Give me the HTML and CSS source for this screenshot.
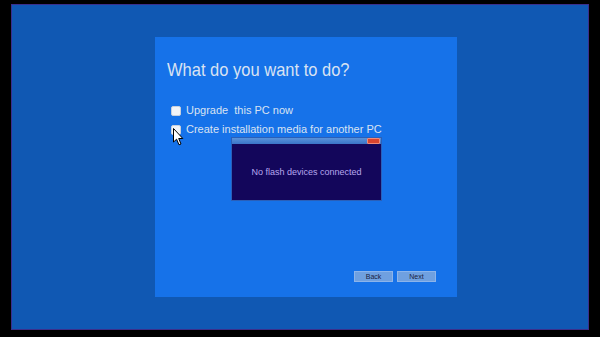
FILE: index.html
```html
<!DOCTYPE html>
<html lang="en">

<head>
	<meta charset="UTF-8">
	<title>Setup</title>
	<link rel="stylesheet" href="styles.css">
</head>

<body>
	<div class="screen">
		<div class="panel">
			<h1 class="title">What do you want to do?</h1>
			<ul class="options">
				<li><span class="box"></span>Upgrade&nbsp; this PC now</li>
				<li><span class="box"></span>Create installation media for another PC</li>
			</ul>
			<div class="buttons">
				<span class="btn">Back</span>
				<span class="btn">Next</span>
			</div>

			<div class="dialog">
				<div class="bar"><span class="close"></span></div>
				<div class="msg">No flash devices connected</div>
			</div>

			<svg class="cursor" width="11" height="18" viewBox="0 0 11 18">
				<path d="M0.5 0.5 L0.5 14 L3.6 11.2 L6 16.8 L8 16 L5.7 10.5 L9.8 10.5 Z" fill="#fff" stroke="#000" stroke-width="1"/>
			</svg>
		</div>
	</div>
</body>

</html>
```

FILE: styles.css
```css
body {
	margin: 0;
	background: #000;
	font-family: 'Liberation Sans', Arial, sans-serif;
}

.screen {
	margin: 4px 11px 0;
	width: 578px;
	height: 326px;
	background: #1058b3;
	box-shadow: inset 0 0 0 1px #3b2f8c;
	padding: 33px 0 0 144px;
	box-sizing: border-box;
}

.panel {
	position: relative;
	width: 302px;
	height: 260px;
	background: #1672e9;
	display: flex;
	flex-direction: column;
	padding: 0 21px 15px 12px;
	box-sizing: border-box;
	color: #d9e2f2;
}

.title {
	margin: 23px 0 0;
	font-size: 16.5px;
	font-weight: normal;
	line-height: 21px;
	transform: scaleY(1.08);
	transform-origin: left bottom;
}

.options {
	list-style: none;
	margin: 20px 0 0;
	padding: 0 0 0 4px;
	font-size: 11px;
	line-height: 19px;
}

.options li {
	display: flex;
	align-items: center;
}

.box {
	width: 10px;
	height: 10px;
	background: #f2f4f8;
	border: 1px solid #c8d0dc;
	border-radius: 2px;
	box-sizing: border-box;
	margin-right: 5px;
}

.buttons {
	margin-top: auto;
	display: flex;
	justify-content: flex-end;
	gap: 4px;
}

.btn {
	width: 39px;
	height: 11px;
	background: #6fa0e0;
	border: 1px solid #8cb4ea;
	box-sizing: border-box;
	font-size: 7px;
	line-height: 9px;
	text-align: center;
	color: #1a2340;
}

.dialog {
	position: absolute;
	left: 76px;
	top: 100px;
	width: 151px;
	height: 64px;
	border: 1px solid #2a5fb8;
	box-sizing: border-box;
	display: flex;
	flex-direction: column;
}

.bar {
	height: 6px;
	background: linear-gradient(#5a92da, #3a74c8);
	display: flex;
	justify-content: flex-end;
	padding-right: 1px;
}

.close {
	width: 13px;
	height: 6px;
	background: #d9452f;
	border: 1px solid #f08a78;
	border-radius: 1px;
	box-sizing: border-box;
}

.msg {
	flex: 1;
	background: #13065b;
	color: #b7a6ee;
	font-size: 9px;
	display: flex;
	align-items: center;
	justify-content: center;
}

.cursor {
	position: absolute;
	left: 18px;
	top: 91px;
}
```
